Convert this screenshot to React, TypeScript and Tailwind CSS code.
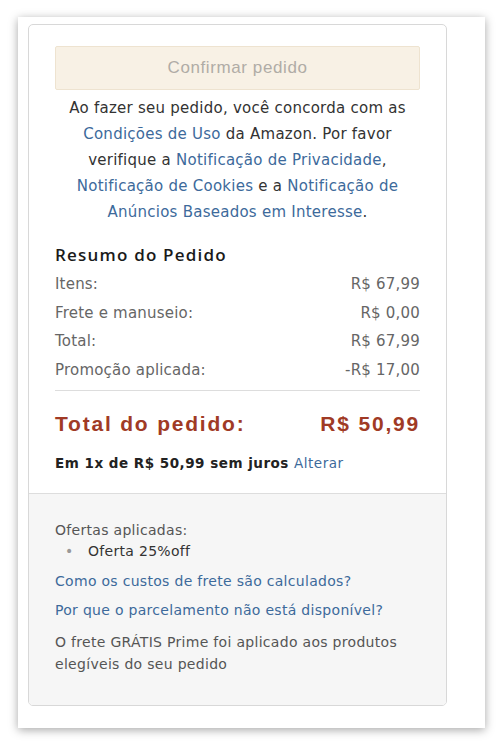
const font = { fontFamily: '"DejaVu Sans", Verdana, sans-serif' }
const arial = { fontFamily: '"Liberation Sans", Arial, sans-serif' }
const open = { fontFamily: '"Open Sans", "Noto Sans", sans-serif' }

function Row({ label, value }: { label: string; value: string }) {
  return (
    <div className="flex justify-between h-[28.5px] items-center text-[15px] tracking-[0.2px] text-[#666]">
      <span>{label}</span>
      <span>{value}</span>
    </div>
  )
}

export default function App() {
  const link = "text-[#3d6a9b]"
  return (
    <div className="min-h-[745px] bg-white pt-[17px] pl-[18px]" style={font}>
      <div className="w-[467px] h-[711px] bg-white shadow-[0_2px_9px_rgba(0,0,0,0.35)] pt-[7px] pl-[10px]">
        <div className="w-[419px] border border-[#d8d8d8] rounded-[5px] overflow-hidden">
          <div className="px-[26px] pt-[21px] pb-[20px]">
            <button className="w-full h-[44px] bg-[#f8f1e5] border border-[#eee3d0] rounded-[2px] text-[17px] tracking-[0.6px] text-[#b0aca6]" style={arial}>
              Confirmar pedido
            </button>
            <p className="mt-[5px] text-center text-[15px] tracking-[0.25px] leading-[26px] text-[#333]">
              Ao fazer seu pedido, você concorda com as<br />
              <span className={link}>Condições de Uso</span> da Amazon. Por favor<br />
              verifique a <span className={link}>Notificação de Privacidade</span>,<br />
              <span className={link}>Notificação de Cookies</span> e a{" "}
              <span className={link}>Notificação de</span><br />
              <span className={link}>Anúncios Baseados em Interesse</span>.
            </p>
            <h2 className="mt-[17px] text-[17px] font-semibold tracking-[1.2px] text-[#1a1a1a] leading-[26px]" style={open}>Resumo do Pedido</h2>
            <div className="mt-[2px]">
              <Row label="Itens:" value="R$ 67,99" />
              <Row label="Frete e manuseio:" value="R$ 0,00" />
              <Row label="Total:" value="R$ 67,99" />
              <Row label="Promoção aplicada:" value="-R$ 17,00" />
            </div>
            <div className="mt-[6px] border-t border-[#ddd]" />
            <div className="mt-[18px] flex justify-between text-[21px] font-bold tracking-[1.8px] text-[#a03a25] leading-[30px]" style={arial}>
              <span>Total do pedido:</span>
              <span>R$ 50,99</span>
            </div>
            <p className="mt-[14px] text-[13.5px] tracking-[0.5px] leading-[20px] font-bold text-[#222]">
              Em 1x de R$ 50,99 sem juros <span className={`font-normal ${link}`}>Alterar</span>
            </p>
          </div>
          <div className="bg-[#f6f6f6] border-t border-[#ddd] px-[26px] pt-[26px] pb-[30px] text-[14px] tracking-[0.3px] text-[#555]">
            <p className="leading-[20px]">Ofertas aplicadas:</p>
            <div className="flex items-center leading-[22px] text-[#333]">
              <span className="w-[33px] pl-[10px] text-[#999]">•</span>
              <span>Oferta 25%off</span>
            </div>
            <p className={`mt-[9px] leading-[20px] ${link}`}>Como os custos de frete são calculados?</p>
            <p className={`mt-[9px] leading-[20px] ${link}`}>Por que o parcelamento não está disponível?</p>
            <p className="mt-[11px] leading-[22px] text-[#555]">
              O frete GRÁTIS Prime foi aplicado aos produtos<br />elegíveis do seu pedido
            </p>
          </div>
        </div>
      </div>
    </div>
  )
}
